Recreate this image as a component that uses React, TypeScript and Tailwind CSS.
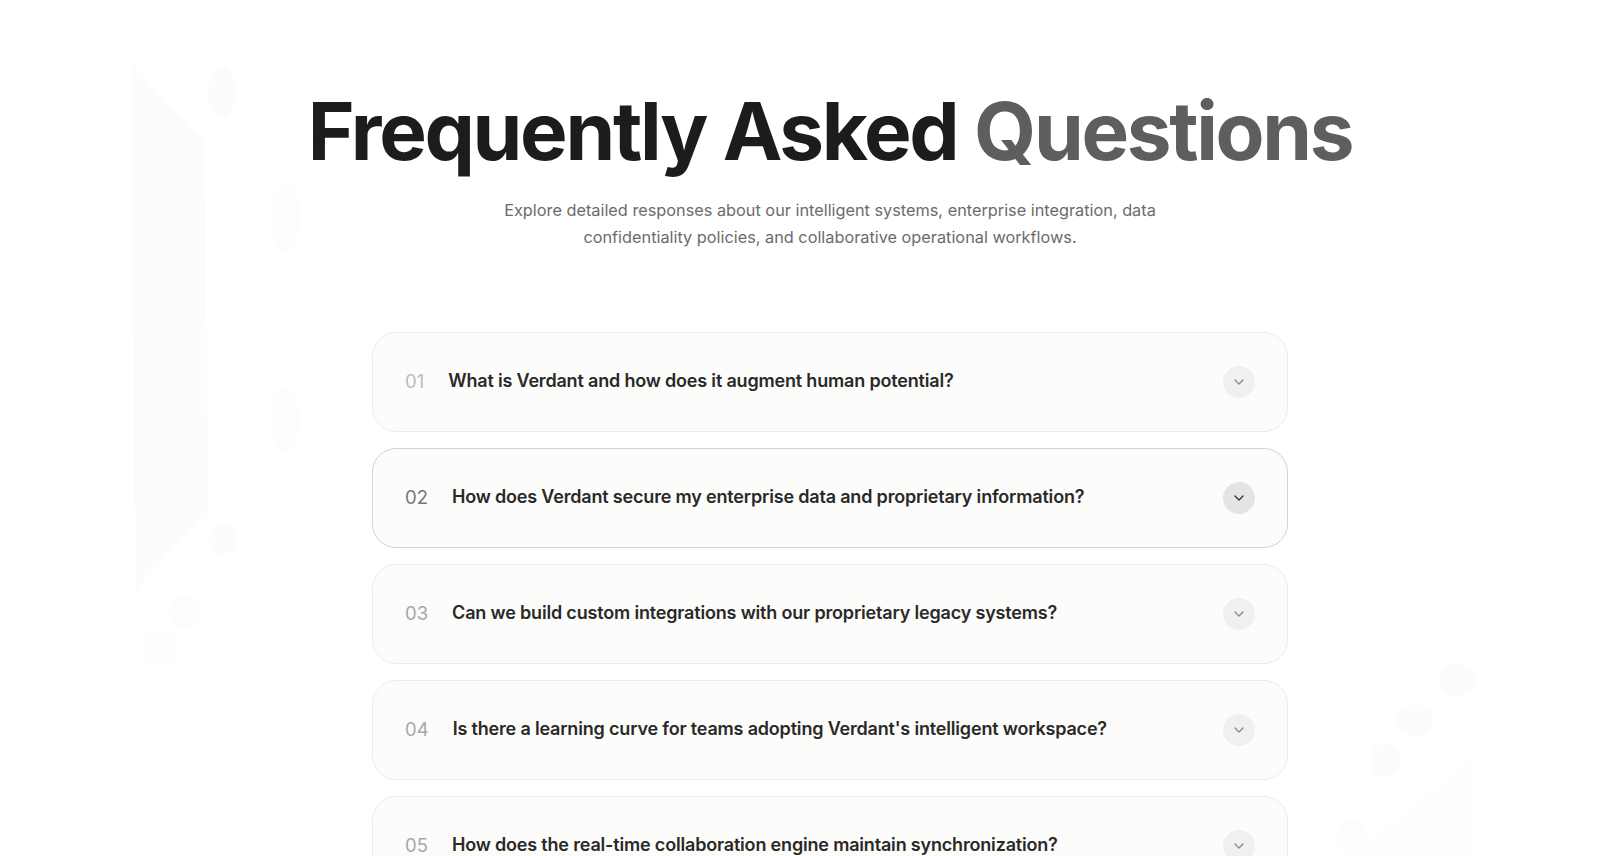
import { ChevronDown } from 'lucide-react';

const faqs = [
  { n: '01', q: 'What is Verdant and how does it augment human potential?' },
  { n: '02', q: 'How does Verdant secure my enterprise data and proprietary information?' },
  { n: '03', q: 'Can we build custom integrations with our proprietary legacy systems?' },
  { n: '04', q: "Is there a learning curve for teams adopting Verdant's intelligent workspace?" },
  { n: '05', q: 'How does the real-time collaboration engine maintain synchronization?' },
  { n: '06', q: 'What kind of support and onboarding does Verdant provide?' },
];

function Decor() {
  return (
    <svg className="pointer-events-none absolute inset-0 h-full w-full" viewBox="0 0 1600 856" preserveAspectRatio="none">
      {/* left faint shapes */}
      <path d="M132 55 L205 120 L208 430 L135 500 Z" fill="#fcfcfb" />
      <ellipse cx="222" cy="78" rx="14" ry="22" fill="#fcfcfc" />
      <ellipse cx="285" cy="185" rx="15" ry="28" fill="#fdfdfd" />
      <ellipse cx="285" cy="355" rx="15" ry="28" fill="#fdfdfd" />
      <ellipse cx="160" cy="200" rx="20" ry="18" fill="#fbfcfa" />
      <ellipse cx="160" cy="340" rx="20" ry="18" fill="#fbfcfa" />
      <ellipse cx="223" cy="455" rx="14" ry="14" fill="#fcfcfc" />
      <ellipse cx="185" cy="518" rx="16" ry="14" fill="#fdfdfd" />
      <ellipse cx="160" cy="548" rx="16" ry="14" fill="#fdfdfd" />
      {/* right faint shapes */}
      <path d="M1470 645 L1470 856 L1335 856 L1335 740 L1405 690 Z" fill="#fdfdfd" />
      <ellipse cx="1457" cy="575" rx="18" ry="14" fill="#fcfcfc" />
      <ellipse cx="1415" cy="610" rx="18" ry="14" fill="#fcfcfc" />
      <ellipse cx="1385" cy="643" rx="16" ry="14" fill="#fcfcfc" />
      <ellipse cx="1352" cy="708" rx="15" ry="15" fill="#fdfdfd" />
      <ellipse cx="1318" cy="790" rx="17" ry="32" fill="#fcfcfc" />
    </svg>
  );
}

export default function App() {
  return (
    <div className="relative min-h-screen overflow-hidden bg-white font-['Inter',sans-serif]">
      <Decor />
      <div className="relative pl-[60px]">
        <div className="mx-auto flex max-w-[1200px] flex-col items-center pt-[91px]">
          {/* Heading */}
          <h1 className="text-[80px] font-bold leading-none tracking-[-0.029em] text-[#1e1c1b]">
            Frequently Asked <span className="text-[#5e5e5e]">Questions</span>
          </h1>
          <p className="mt-[26px] max-w-[680px] text-center text-[16.3px] leading-[27px] text-[#6b6b6b]">
            Explore detailed responses about our intelligent systems, enterprise integration, data
            confidentiality policies, and collaborative operational workflows.
          </p>

          {/* List */}
          <div className="mt-[81px] flex w-[916px] flex-col gap-4">
            {faqs.map((f, i) => {
              const active = i === 1;
              return (
                <div
                  key={f.n}
                  className={`flex h-[100px] items-center gap-6 rounded-[24px] border bg-[#fcfcfb] px-8 ${
                    active ? 'border-[#d2d2d2]' : 'border-[#ececec]'
                  }`}
                >
                  <span
                    className={`shrink-0 text-[18.5px] font-normal ${
                      active ? 'text-[#777777]' : i === 0 ? 'text-[#bdbdbd]' : 'text-[#a8a8a8]'
                    }`}
                  >
                    {f.n}
                  </span>
                  <span className="-mt-1 flex-1 text-[18px] font-semibold tracking-[-0.01em] text-[#2a2928]">
                    {f.q}
                  </span>
                  <span
                    className={`flex h-8 w-8 shrink-0 items-center justify-center rounded-full ${
                      active ? 'bg-[#e4e4e4] text-[#333333]' : 'bg-[#f0f0f0] text-[#8a8a8a]'
                    }`}
                  >
                    <ChevronDown className="h-4 w-4" strokeWidth={2} />
                  </span>
                </div>
              );
            })}
          </div>
        </div>
      </div>
    </div>
  );
}
